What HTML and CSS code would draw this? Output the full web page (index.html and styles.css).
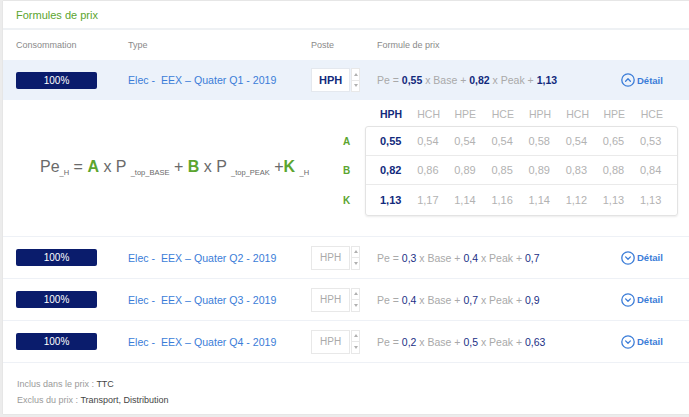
FILE: index.html
```html
<!DOCTYPE html>
<html lang="fr">
<head>
<meta charset="utf-8">
<link rel="stylesheet" href="styles.css">
</head>
<body>
<div class="card">
  <div class="title">Formules de prix</div>
  <div class="row head">
    <div>Consommation</div>
    <div>Type</div>
    <div>Poste</div>
    <div>Formule de prix</div>
    <div></div>
  </div>

  <div class="row item active">
    <div><span class="badge">100%</span></div>
    <div class="type">Elec -&nbsp; EEX – Quater Q1 - 2019</div>
    <div><span class="poste sel"><span class="pv">HPH</span><span class="spin"><i class="up"></i><i class="dn"></i></span></span></div>
    <div class="formula">Pe = <b>0,55</b> x Base + <b>0,82</b> x Peak + <b>1,13</b></div>
    <div class="detail"><svg width="14" height="14" viewBox="0 0 14 14"><circle cx="7" cy="7" r="6.2" fill="none" stroke="#3b7dd8" stroke-width="1.3"/><path d="M4.6 8.2 L7 5.8 L9.4 8.2" fill="none" stroke="#3b7dd8" stroke-width="1.3" stroke-linecap="round" stroke-linejoin="round"/></svg>Détail</div>
  </div>

  <div class="expand">
    <div class="bigf">Pe<sub>_H</sub> = <em>A</em> x P <sub>_top_BASE</sub> + <em>B</em> x P <sub>_top_PEAK</sub> +<em>K</em> <sub>_H</sub></div>
    <div class="mat">
      <div class="mhead">
        <span class="cur">HPH</span><span>HCH</span><span>HPE</span><span>HCE</span><span>HPH</span><span>HCH</span><span>HPE</span><span>HCE</span>
      </div>
      <div class="mbody">
        <div class="mrow"><span class="lab">A</span><span class="cur">0,55</span><span>0,54</span><span>0,54</span><span>0,54</span><span>0,58</span><span>0,54</span><span>0,65</span><span>0,53</span></div>
        <div class="mrow"><span class="lab">B</span><span class="cur">0,82</span><span>0,86</span><span>0,89</span><span>0,85</span><span>0,89</span><span>0,83</span><span>0,88</span><span>0,84</span></div>
        <div class="mrow"><span class="lab">K</span><span class="cur">1,13</span><span>1,17</span><span>1,14</span><span>1,16</span><span>1,14</span><span>1,12</span><span>1,13</span><span>1,13</span></div>
      </div>
    </div>
  </div>

  <div class="row item">
    <div><span class="badge">100%</span></div>
    <div class="type">Elec -&nbsp; EEX – Quater Q2 - 2019</div>
    <div><span class="poste"><span class="pv">HPH</span><span class="spin"><i class="up"></i><i class="dn"></i></span></span></div>
    <div class="formula">Pe = <b>0,3</b> x Base + <b>0,4</b> x Peak + <b>0,7</b></div>
    <div class="detail"><svg width="14" height="14" viewBox="0 0 14 14"><circle cx="7" cy="7" r="6.2" fill="none" stroke="#3b7dd8" stroke-width="1.3"/><path d="M4.6 5.9 L7 8.3 L9.4 5.9" fill="none" stroke="#3b7dd8" stroke-width="1.3" stroke-linecap="round" stroke-linejoin="round"/></svg>Détail</div>
  </div>

  <div class="row item">
    <div><span class="badge">100%</span></div>
    <div class="type">Elec -&nbsp; EEX – Quater Q3 - 2019</div>
    <div><span class="poste"><span class="pv">HPH</span><span class="spin"><i class="up"></i><i class="dn"></i></span></span></div>
    <div class="formula">Pe = <b>0,4</b> x Base + <b>0,7</b> x Peak + <b>0,9</b></div>
    <div class="detail"><svg width="14" height="14" viewBox="0 0 14 14"><circle cx="7" cy="7" r="6.2" fill="none" stroke="#3b7dd8" stroke-width="1.3"/><path d="M4.6 5.9 L7 8.3 L9.4 5.9" fill="none" stroke="#3b7dd8" stroke-width="1.3" stroke-linecap="round" stroke-linejoin="round"/></svg>Détail</div>
  </div>

  <div class="row item">
    <div><span class="badge">100%</span></div>
    <div class="type">Elec -&nbsp; EEX – Quater Q4 - 2019</div>
    <div><span class="poste"><span class="pv">HPH</span><span class="spin"><i class="up"></i><i class="dn"></i></span></span></div>
    <div class="formula">Pe = <b>0,2</b> x Base + <b>0,5</b> x Peak + <b>0,63</b></div>
    <div class="detail"><svg width="14" height="14" viewBox="0 0 14 14"><circle cx="7" cy="7" r="6.2" fill="none" stroke="#3b7dd8" stroke-width="1.3"/><path d="M4.6 5.9 L7 8.3 L9.4 5.9" fill="none" stroke="#3b7dd8" stroke-width="1.3" stroke-linecap="round" stroke-linejoin="round"/></svg>Détail</div>
  </div>

  <div class="foot">
    <div>Inclus dans le prix : <span>TTC</span></div>
    <div>Exclus du prix : <span>Transport, Distribution</span></div>
  </div>
</div>
</body>
</html>
```

FILE: styles.css
```css
* { box-sizing: border-box; }
html, body { margin: 0; padding: 0; }
body {
  background: #ececec;
  font-family: "Liberation Sans", Arial, sans-serif;
  padding: 1px 0 3px 3px;
  width: 689px;
  height: 417px;
  overflow: hidden;
}
.card {
  background: #fff;
  height: 413px;
  box-shadow: 0 0 1px rgba(0,0,0,0.15);
}
.title {
  color: #5ba52f;
  font-size: 11px;
  height: 29px;
  line-height: 28px;
  padding-left: 13px;
  border-bottom: 2px solid #eef1f4;
}
.row {
  display: grid;
  grid-template-columns: 112px 183px 66px 244px 1fr;
  align-items: center;
  padding-left: 13px;
}
.head {
  height: 30px;
  font-size: 9px;
  color: #8a8a8a;
}
.item {
  height: 42px;
  border-bottom: 1px solid #eef1f6;
}
.item.active {
  height: 40px;
  background: #ecf2fa;
  border-bottom: none;
}
.badge {
  display: block;
  width: 81px;
  height: 17px;
  line-height: 17px;
  background: #0a1c6c;
  color: #fff;
  text-align: center;
  font-size: 10px;
  border-radius: 2px;
}
.type {
  color: #3b7dd8;
  font-size: 10.6px;
}
.poste {
  display: flex;
  align-items: stretch;
  height: 24px;
  width: 49px;
}
.pv {
  width: 40px;
  background: #fff;
  border: 1px solid #e8e8e8;
  font-size: 10px;
  color: #aaa;
  display: flex;
  align-items: center;
  justify-content: center;
}
.sel .pv {
  color: #122a7c;
  font-weight: bold;
  font-size: 11px;
  border-color: #e4e8ee;
}
.spin {
  width: 9px;
  margin-left: 1px;
  border: 1px solid #e8e8e8;
  background: #fff;
  display: flex;
  flex-direction: column;
}
.spin i {
  flex: 1;
  display: flex;
  align-items: center;
  justify-content: center;
}
.spin i.up { border-bottom: 1px solid #e8e8e8; }
.spin i::before {
  content: "";
  width: 0; height: 0;
  border-left: 2.5px solid transparent;
  border-right: 2.5px solid transparent;
}
.spin i.up::before { border-bottom: 3px solid #b0b0b0; }
.spin i.dn::before { border-top: 3px solid #b0b0b0; }
.formula {
  font-size: 10.5px;
  color: #a9a9a9;
  white-space: nowrap;
}
.formula b {
  color: #1b2f86;
  font-weight: normal;
}
.active .formula b {
  font-weight: bold;
  color: #122a7c;
}
.detail {
  display: flex;
  align-items: center;
  gap: 2px;
  color: #3b7dd8;
  font-size: 9.5px;
  font-weight: 600;
}
.expand {
  height: 137px;
  display: flex;
  border-bottom: 1px solid #eef1f6;
}
.bigf {
  width: 341px;
  padding-left: 37px;
  padding-top: 58px;
  font-size: 16px;
  color: #6a6a6a;
  white-space: nowrap;
}
.bigf sub {
  font-size: 7.5px;
  vertical-align: -3px;
}
.bigf em {
  font-style: normal;
  font-weight: bold;
  color: #5ba52f;
  font-size: 16px;
}
.mat {
  width: 334px;
}
.mhead {
  display: flex;
  height: 26px;
  align-items: center;
  padding-left: 36px;
  padding-top: 2px;
  font-size: 10.5px;
  color: #b5b5b5;
}
.mhead span, .mrow span {
  width: 37.6px;
}
.mhead .cur {
  color: #122a7c;
  font-weight: bold;
}
.mbody {
  margin-left: 21px;
  border: 1px solid #e3e3e3;
  border-radius: 3px;
  box-shadow: 0 1px 2px rgba(0,0,0,0.08);
  position: relative;
}
.mrow {
  display: flex;
  align-items: center;
  height: 29px;
  padding-left: 14px;
  font-size: 11px;
  color: #b2b2b2;
  border-bottom: 1px solid #eaeaea;
}
.mrow:last-child {
  border-bottom: none;
  height: 30px;
}
.mrow .cur {
  color: #122a7c;
  font-weight: bold;
}
.mrow .lab {
  position: absolute;
  left: -23px;
  width: auto;
  color: #5ba52f;
  font-weight: bold;
  font-size: 10px;
}
.foot {
  padding: 13px 0 0 14px;
  font-size: 9px;
  color: #9a9a9a;
  line-height: 16px;
}
.foot span {
  color: #444;
}
```
